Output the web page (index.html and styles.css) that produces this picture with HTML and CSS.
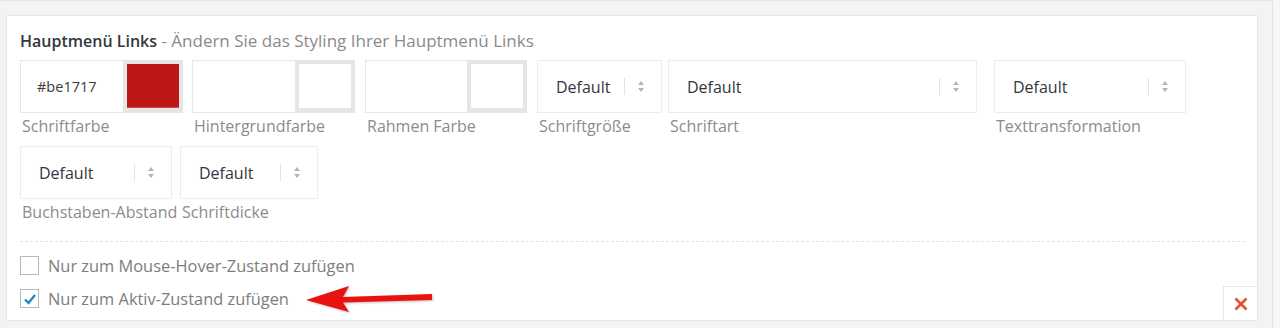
FILE: index.html
```
<!DOCTYPE html>
<html lang="de">
<head>
  <meta charset="UTF-8">
  <title>Hauptmenü Links</title>
  <link rel="stylesheet" href="styles.css">
</head>
<body>

<div class="wrap">
  <div class="panel">
    <h3 class="title"><b>Hauptmenü Links</b> - Ändern Sie das Styling Ihrer Hauptmenü Links</h3>

    <div class="fields">
      <div class="field f1">
        <div class="color-input">
          <span class="hex">#be1717</span>
          <span class="swatch"><i class="chip red"></i></span>
        </div>
        <label>Schriftfarbe</label>
      </div>
      <div class="field f2">
        <div class="color-input">
          <span class="hex"></span>
          <span class="swatch"><i class="chip"></i></span>
        </div>
        <label>Hintergrundfarbe</label>
      </div>
      <div class="field f3">
        <div class="color-input">
          <span class="hex"></span>
          <span class="swatch"><i class="chip"></i></span>
        </div>
        <label>Rahmen Farbe</label>
      </div>
      <div class="field f4">
        <div class="select"><span>Default</span><span class="arrows"></span></div>
        <label>Schriftgröße</label>
      </div>
      <div class="field f5">
        <div class="select"><span>Default</span><span class="arrows"></span></div>
        <label>Schriftart</label>
      </div>
      <div class="field f6">
        <div class="select"><span>Default</span><span class="arrows"></span></div>
        <label>Texttransformation</label>
      </div>
      <div class="field f7">
        <div class="select"><span>Default</span><span class="arrows"></span></div>
        <label>Buchstaben-Abstand</label>
      </div>
      <div class="field f8">
        <div class="select"><span>Default</span><span class="arrows"></span></div>
        <label>Schriftdicke</label>
      </div>
    </div>

    <div class="separator"></div>

    <div class="checks">
      <div class="check-row">
        <span class="box"></span>
        <span>Nur zum Mouse-Hover-Zustand zufügen</span>
      </div>
      <div class="check-row">
        <span class="box">
          <svg width="14" height="14" viewBox="0 0 14 14"><path d="M2 7.5 L5.5 11 L12 3" fill="none" stroke="#1e8cbe" stroke-width="2.4"/></svg>
        </span>
        <span>Nur zum Aktiv-Zustand zufügen</span>
        <svg class="arrow" width="130" height="30" viewBox="0 0 130 30">
          <polygon points="1,16 44,2 38,13 127,10 127,16 38,18.5 44,28" fill="#e8120f"/>
        </svg>
      </div>
    </div>

    <div class="remove">
      <svg width="14" height="14" viewBox="0 0 14 14"><path d="M1.5 1.5 L12.5 12.5 M12.5 1.5 L1.5 12.5" stroke="#e2502b" stroke-width="2.6"/></svg>
    </div>
  </div>
</div>

</body>
</html>
```
FILE: styles.css
```
body {
  margin: 0;
  font-family: "Open Sans", "Liberation Sans", sans-serif;
  background: #f7f7f7;
}
.wrap {
  width: 1266px;
  height: 313px;
  padding: 14px 0 0 6px;
  background: #f3f3f3;
  border-top: 1px solid #e6e6e6;
  border-right: 1px solid #e3e3e3;
}
.panel {
  position: relative;
  width: 1225px;
  height: 289px;
  padding: 15px 12px 0 13px;
  background: #fff;
  border: 1px solid #e6e6e6;
}
.title {
  margin: 0;
  font-size: 17px;
  line-height: 20px;
  font-weight: normal;
  color: #8a8a8a;
}
.title b {
  font-size: 16px;
  font-weight: 600;
  color: #32373c;
}
.fields {
  display: flex;
  flex-wrap: wrap;
  margin-top: 9px;
}
.field {
  margin-bottom: 10px;
}
.field label {
  display: block;
  margin-top: 3px;
  padding-left: 2px;
  font-size: 16px;
  line-height: 20px;
  color: #8c8c8c;
  white-space: nowrap;
}
.f1, .f2 { width: 163px; }
.f3 { width: 162px; }
.f1 { margin-right: 9px; }
.f2, .f3 { margin-right: 10px; }
.f4 { width: 125px; margin-right: 6px; }
.f5 { width: 309px; margin-right: 17px; }
.f6 { width: 192px; }
.f7 { width: 152px; margin-right: 8px; }
.f8 { width: 138px; }

.color-input {
  display: flex;
  height: 53px;
}
.hex {
  flex: 1;
  border: 1px solid #e6e6e6;
  border-right: none;
  padding-left: 16px;
  font-size: 14.5px;
  line-height: 51px;
  color: #3c3c3c;
}
.swatch {
  width: 52px;
  padding: 4px 4px 5px 4px;
  background: #e6e6e6;
}
.chip {
  display: block;
  height: 44px;
  background: #fff;
}
.chip.red {
  background: #bd1717;
  border-bottom: 1px solid #d44;
  box-sizing: border-box;
}

.select {
  position: relative;
  display: flex;
  align-items: center;
  height: 51px;
  padding-left: 18px;
  border: 1px solid #ececec;
  font-size: 16px;
  color: #32373c;
}
.arrows {
  position: absolute;
  right: 36px;
  top: 17px;
  height: 17px;
  border-left: 1px solid #e2e2e2;
}
.arrows::before, .arrows::after {
  content: "";
  position: absolute;
  left: 13px;
  border-left: 3.5px solid transparent;
  border-right: 3.5px solid transparent;
}
.arrows::before {
  top: 3px;
  border-bottom: 4px solid #b5b5b5;
}
.arrows::after {
  top: 10px;
  border-top: 4px solid #b5b5b5;
}

.separator {
  margin-top: 9px;
  border-top: 1px dashed #e3e3e3;
}
.checks {
  margin-top: 7px;
}
.check-row {
  display: flex;
  align-items: center;
  height: 33px;
  font-size: 16.4px;
  color: #7d7d7d;
}
.box {
  width: 17px;
  height: 17px;
  margin-right: 9px;
  border: 1px solid #b4b9be;
  background: #fff;
  display: flex;
  align-items: center;
  justify-content: center;
}
.arrow {
  margin-left: 16px;
  filter: drop-shadow(1px 1px 1px rgba(0,0,0,0.25));
}
.remove {
  position: absolute;
  right: 0;
  bottom: 0;
  width: 33px;
  height: 33px;
  border-left: 1px solid #e6e6e6;
  border-top: 1px solid #e6e6e6;
  display: flex;
  align-items: center;
  justify-content: center;
}
```
